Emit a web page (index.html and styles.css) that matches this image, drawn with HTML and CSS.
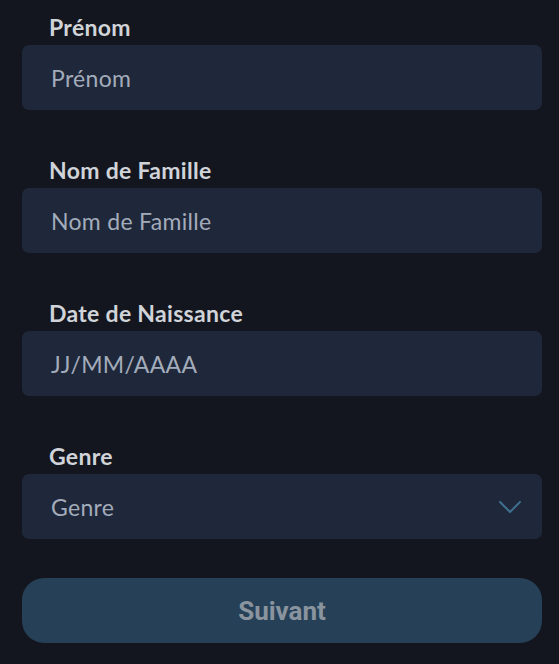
FILE: index.html
```html
<!DOCTYPE html>
<html lang="fr">
<head>
  <meta charset="UTF-8">
  <title>Inscription</title>
  <link rel="stylesheet" href="styles.css">
</head>
<body>
  <form class="form">
    <div class="field">
      <label for="prenom">Prénom</label>
      <input type="text" id="prenom" placeholder="Prénom">
    </div>

    <div class="field">
      <label for="nom">Nom de Famille</label>
      <input type="text" id="nom" placeholder="Nom de Famille">
    </div>

    <div class="field">
      <label for="naissance">Date de Naissance</label>
      <input type="text" id="naissance" placeholder="JJ/MM/AAAA">
    </div>

    <div class="field">
      <label for="genre">Genre</label>
      <div class="select">
        <span class="select-value">Genre</span>
        <svg class="chevron" width="22" height="12" viewBox="0 0 22 12" fill="none">
          <path d="M1 1 L11 11 L21 1" stroke="#3f6f8e" stroke-width="2" stroke-linecap="round" stroke-linejoin="round"/>
        </svg>
      </div>
    </div>

    <button type="button" class="next-btn">Suivant</button>
  </form>
</body>
</html>
```

FILE: styles.css
```css
* { box-sizing: border-box; }

body {
  margin: 0;
  background-color: #13161f;
  font-family: Lato, 'Noto Sans', sans-serif;
}

.form {
  padding: 15px 17px 0 22px;
  display: flex;
  flex-direction: column;
}

.field {
  display: flex;
  flex-direction: column;
  gap: 6px;
  margin-bottom: 48px;
}

.field:last-of-type {
  margin-bottom: 39px;
}

label {
  margin-left: 27px;
  color: #d0d3d8;
  font-size: 23px;
  font-weight: bold;
  letter-spacing: 0.3px;
  line-height: 24px;
}

input[type="text"],
.select {
  width: 100%;
  height: 65px;
  padding: 0 29px;
  background-color: #1f273a;
  border: none;
  border-radius: 7px;
  font-family: Lato, 'Noto Sans', sans-serif;
  font-size: 23px;
  letter-spacing: 0.3px;
  color: #a3acba;
  outline: none;
}

input[type="text"]::placeholder {
  color: #a3acba;
}

.select {
  display: flex;
  align-items: center;
  justify-content: space-between;
  padding-right: 21px;
}

.next-btn {
  height: 65px;
  width: 100%;
  background-color: #264157;
  color: #8a949f;
  border: none;
  border-radius: 22px;
  font-family: Roboto, 'Liberation Sans', sans-serif;
  font-size: 26px;
  font-weight: bold;
  cursor: pointer;
}
```
